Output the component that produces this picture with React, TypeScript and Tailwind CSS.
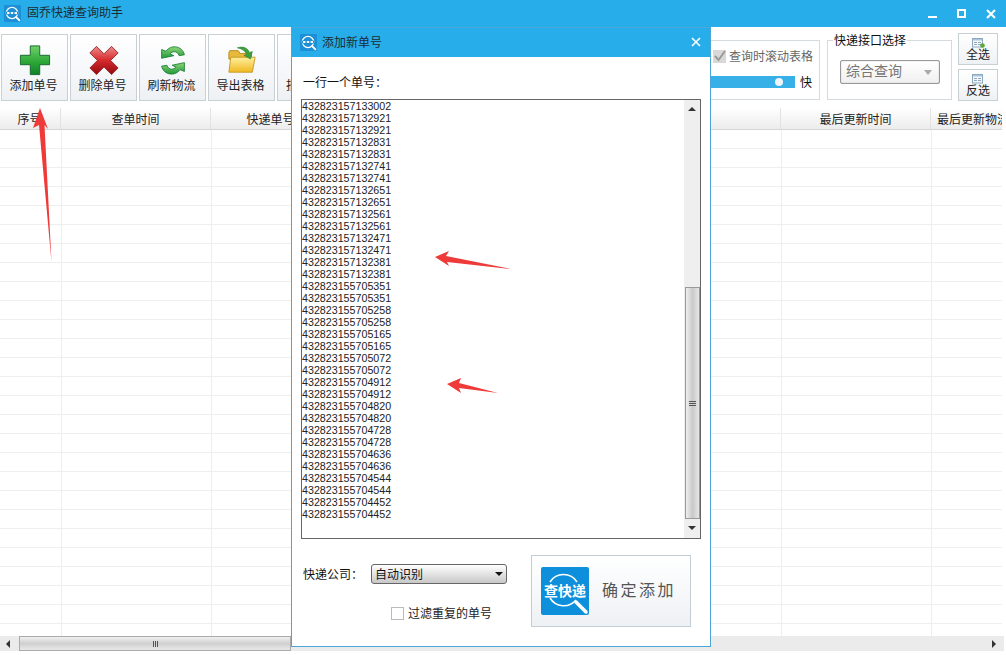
import type { ReactNode } from "react";

const numbers = [
  "432823157133002",
  ...[
    "432823157132921",
    "432823157132831",
    "432823157132741",
    "432823157132651",
    "432823157132561",
    "432823157132471",
    "432823157132381",
    "432823155705351",
    "432823155705258",
    "432823155705165",
    "432823155705072",
    "432823155704912",
    "432823155704820",
    "432823155704728",
    "432823155704636",
    "432823155704544",
    "432823155704452",
  ].flatMap((n) => [n, n]),
];

const columns = [
  { title: "序号", cls: "w-[62px] justify-center" },
  { title: "查单时间", cls: "w-[150px] justify-center" },
  { title: "快递单号", cls: "w-[120px] justify-center" },
  { title: "", cls: "w-[450px] justify-center" },
  { title: "最后更新时间", cls: "w-[150px] justify-center" },
  { title: "最后更新物流信息", cls: "w-[150px] pl-[6px]" },
];

const rows = Array.from({ length: 27 }, (_, i) => i);

const AppLogo = () => (
  <svg width="17" height="17" viewBox="0 0 17 17" className="shrink-0">
    <rect width="17" height="17" rx="1" fill="#1c8fd6" />
    <circle cx="8" cy="8" r="5.600" fill="none" stroke="#fff" strokeWidth="1.300" />
    <rect x="2" y="6.500" width="12" height="3" fill="#1c8fd6" />
    <rect x="3" y="7" width="2.400" height="2" fill="#fff" />
    <rect x="6.800" y="7" width="2.400" height="2" fill="#fff" />
    <rect x="10.600" y="7" width="2.400" height="2" fill="#fff" />
    <path d="M12 12l3.400 3.400" stroke="#fff" strokeWidth="1.800" strokeLinecap="round" />
  </svg>
);

const PlusIcon = () => (
  <svg width="32" height="32" viewBox="0 0 34 34">
    <defs>
      <linearGradient id="plusFill" x1="0" y1="0" x2="0" y2="1">
        <stop offset="0" stopColor="#6fd06a" />
        <stop offset="0.55" stopColor="#2ea838" />
        <stop offset="1" stopColor="#11802a" />
      </linearGradient>
    </defs>
    <path
      d="M12 2h10v10h10.500v10H22v10.500H12V22H1.500V12H12z"
      fill="url(#plusFill)"
      stroke="#14692a"
      strokeWidth="1"
    />
  </svg>
);

const CrossIcon = () => (
  <svg width="32" height="32" viewBox="0 0 34 34">
    <defs>
      <linearGradient id="crossFill" x1="0" y1="0" x2="0" y2="1">
        <stop offset="0" stopColor="#f08a8a" />
        <stop offset="0.5" stopColor="#d42a2c" />
        <stop offset="1" stopColor="#96090f" />
      </linearGradient>
    </defs>
    <path
      d="M9 2.500L17 10.500 25 2.500 32 9.500 24 17.500 32 25.500 25 32.500 17 24.500 9 32.500 2 25.500 10 17.500 2 9.500z"
      fill="url(#crossFill)"
      stroke="#8f2a2c"
      strokeWidth="1"
    />
  </svg>
);

const RefreshIcon = () => (
  <svg width="28" height="32" viewBox="0 0 32 34">
    <defs>
      <linearGradient id="refreshFill" x1="0" y1="0" x2="0" y2="1">
        <stop offset="0" stopColor="#8fd67a" />
        <stop offset="1" stopColor="#1f9a3a" />
      </linearGradient>
    </defs>
    <path
      d="M3 5l5 2C11 3 15 1.500 19 2c5 .5 9 4 10 9l-6 1c-1-3-3-4.500-5.500-4.500-2 0-3.700 1-5 2.500l4.500 2L3 15z"
      fill="url(#refreshFill)"
      stroke="#1c7f34"
      strokeWidth="1"
    />
    <path
      d="M29 30l-5-2c-3 4-7 5.500-11 5-5-.5-9-4-10-9l6-1c1 3 3 4.500 5.500 4.500 2 0 3.700-1 5-2.500l-4.500-2L29 20z"
      fill="url(#refreshFill)"
      stroke="#1c7f34"
      strokeWidth="1"
    />
  </svg>
);

const FolderIcon = () => (
  <svg width="30" height="30" viewBox="0 0 32 32">
    <defs>
      <linearGradient id="folderFill" x1="0" y1="0" x2="0" y2="1">
        <stop offset="0" stopColor="#fff0a0" />
        <stop offset="1" stopColor="#f0b820" />
      </linearGradient>
    </defs>
    <path d="M2 8l1-2h9l2 3h12v6H2z" fill="#e8b93a" stroke="#b98a1c" strokeWidth="1" />
    <path d="M4 13h26l-3 16H2z" fill="url(#folderFill)" stroke="#c79a22" strokeWidth="1" />
    <path
      d="M11 3c6-2 11 0 13 5l3-1-2 8-7-4 3-1c-2-4-5-6-10-7z"
      fill="#3f9f3d"
      stroke="#2a7d2c"
      strokeWidth="0.600"
    />
  </svg>
);

const ListIcon = ({ plus }: { plus?: boolean }) => (
  <svg width="14" height="10" viewBox="0 0 14 10" className="shrink-0">
    <rect x="1.500" y="0.500" width="10" height="8.500" fill="#f4f8fb" stroke="#8fa8c0" />
    <rect x="2" y="1" width="9" height="1.500" fill="#a9c4dc" />
    <path d="M3 4.500h3M7 4.500h3M3 6.500h3M7 6.500h3" stroke="#8fa8c0" />
    {plus && <circle cx="11.500" cy="7.500" r="2.300" fill="#59a83c" />}
  </svg>
);

const ToolButton = ({ label, icon, labelCls }: { label: string; icon?: ReactNode; labelCls?: string }) => (
  <button className="flex h-[67px] w-[67px] shrink-0 flex-col items-center border border-[#c8d0d4] bg-gradient-to-b from-white to-[#eef1f4] pt-[8px] text-[12px] text-[#222]">
    <span className="flex h-[34px] items-center justify-center">{icon}</span>
    <span className={`leading-[16px] whitespace-nowrap ${labelCls ?? "-ml-[2px]"}`}>{label}</span>
  </button>
);

const SmallButton = ({ label, plus }: { label: string; plus?: boolean }) => (
  <button className="flex h-[32px] w-[40px] flex-col items-center border border-[#c8d0d4] bg-gradient-to-b from-white to-[#eef1f4] pt-[4px] text-[12px] leading-[13px] text-[#222]">
    <ListIcon plus={plus} />
    <span className="-mt-[1px]">{label}</span>
  </button>
);

const ArrowMarks = () => (
  <svg width="1006" height="655" viewBox="0 0 1006 655" className="pointer-events-none absolute top-0 left-0 z-20">
    <path d="M40 108L48 129 44.500 125 51.500 262 39 125 33 128z" fill="#ee3a38" />
    <path d="M435 257L449 251 446 256 511 269 447 262 449 266z" fill="#ee3a38" />
    <path d="M447 384L461 378 459 383 498 393 459 388 461 393z" fill="#ee3a38" />
  </svg>
);

const Dialog = () => (
  <div className="absolute top-[27px] left-[291px] z-10 flex h-[620px] w-[420px] flex-col border border-[#4aa6d6] bg-white">
    <div className="flex h-[29px] shrink-0 items-center bg-[#27aeea] pr-[9px] pl-[8px] text-[12px] text-[#1c2b36]">
      <AppLogo />
      <span className="-mt-[2px] ml-[5px]">添加新单号</span>
      <svg width="10" height="10" viewBox="0 0 10 10" className="-mt-[1px] ml-auto">
        <path d="M1 1l8 8M9 1l-8 8" stroke="#fff" strokeWidth="1.600" />
      </svg>
    </div>
    <div className="flex flex-1 flex-col pr-[9px] pl-[9px]">
      <div className="mt-[17px] pl-[2px] text-[12px] leading-[16px] text-[#111]">一行一个单号：</div>
      <div className="mt-[9px] flex h-[440px] border border-[#666] bg-white">
        <div className="flex-1 font-['Liberation_Sans',sans-serif] text-[10.700px] leading-[12px] text-[#222]">
          {numbers.map((n, i) => (
            <div key={i} className="h-[12px]">
              {n}
            </div>
          ))}
        </div>
        <div className="flex w-[16px] shrink-0 flex-col items-center bg-[#efefef]">
          <div className="mt-[7px] h-0 w-0 border-x-[4px] border-b-[4px] border-x-transparent border-b-[#333]" />
          <div className="mt-[176px] flex h-[232px] w-[15px] flex-col items-center justify-center gap-[1px] border border-[#999] bg-gradient-to-r from-[#efefef] via-[#c9c9c9] to-[#e6e6e6]">
            <span className="h-[1px] w-[7px] bg-[#555]" />
            <span className="h-[1px] w-[7px] bg-[#555]" />
            <span className="h-[1px] w-[7px] bg-[#555]" />
          </div>
          <div className="mt-[7px] h-0 w-0 border-x-[4px] border-t-[4px] border-x-transparent border-t-[#333]" />
        </div>
      </div>
      <div className="flex">
        <div className="w-[230px]">
          <div className="mt-[25px] flex items-center pl-[2px] text-[12px] text-[#111]">
            <span className="w-[68px]">快递公司：</span>
            <div className="flex h-[20px] w-[136px] items-center justify-between rounded-[3px] border border-[#666] bg-gradient-to-b from-white to-[#c8c8c8] pr-[3px] pl-[3px]">
              <span>自动识别</span>
              <span className="h-0 w-0 border-x-[4px] border-t-[4px] border-x-transparent border-t-[#111]" />
            </div>
          </div>
          <div className="mt-[20px] ml-[90px] flex items-center text-[12px] text-[#222]">
            <span className="h-[13px] w-[13px] border border-[#bbb] bg-white" />
            <span className="ml-[4px]">过滤重复的单号</span>
          </div>
        </div>
        <button className="mt-[16px] flex h-[72px] w-[160px] items-center border border-[#c5ced6] bg-gradient-to-b from-white to-[#eef1f4] pl-[9px]">
          <span className="relative flex h-[48px] w-[48px] shrink-0 items-center justify-center rounded-[2px] bg-[#0e8fdc]">
            <svg width="48" height="48" viewBox="0 0 48 48" className="absolute top-0 left-0">
              <path d="M9 15a16 16 0 0 1 27 0M9 31a16 16 0 0 0 26 2" fill="none" stroke="#fff" strokeWidth="1.500" />
              <path d="M35 35l10 10" stroke="#fff" strokeWidth="3.500" strokeLinecap="round" />
            </svg>
            <span className="relative -mt-[2px] text-[14px] leading-none font-bold whitespace-nowrap text-white">查快递</span>
          </span>
          <span className="-mt-[5px] ml-[13px] text-[16px] tracking-[2.500px] whitespace-nowrap text-[#555]">确定添加</span>
        </button>
      </div>
    </div>
  </div>
);

export default function App() {
  return (
    <div className="relative flex h-[655px] w-[1006px] flex-col overflow-hidden bg-white font-['Noto_Sans_CJK_SC','Liberation_Sans',sans-serif]">
      {/* title bar */}
      <div className="flex h-[27px] shrink-0 items-center bg-[#27aeea] pr-[10px] pl-[4px] text-[12px] text-[#1c2b36]">
        <AppLogo />
        <span className="-mt-[3px] ml-[6px]">固乔快递查询助手</span>
        <div className="ml-auto flex items-center gap-[20px]">
          <span className="mt-[7px] h-[2px] w-[9px] bg-white" />
          <span className="h-[9px] w-[9px] border-2 border-white" />
          <svg width="10" height="10" viewBox="0 0 10 10">
            <path d="M1 1l8 8M9 1l-8 8" stroke="#fff" strokeWidth="2" />
          </svg>
        </div>
      </div>

      {/* toolbar */}
      <div className="flex h-[81px] shrink-0 items-start justify-between pt-[7px] pr-[8px] pl-[1px]">
        <div className="flex gap-[2px]">
          <ToolButton label="添加单号" icon={<PlusIcon />} />
          <ToolButton label="删除单号" icon={<CrossIcon />} />
          <ToolButton label="刷新物流" icon={<RefreshIcon />} />
          <ToolButton label="导出表格" icon={<FolderIcon />} />
          <ToolButton label="批" labelCls="self-start ml-[8px]" />
        </div>
        <div className="flex gap-[7px]">
          <div className="mt-[6px] flex h-[60px] w-[177px] flex-col items-end border border-[#d4dade] pr-[6px]">
            <div className="mt-[6px] flex items-center text-[12px] text-[#666]">
              <span className="mr-[3px] flex h-[13px] w-[13px] items-center justify-center bg-[#d8d8d8]">
                <svg width="13" height="13" viewBox="0 0 13 13">
                  <path d="M2 6l3.500 4L12 1" fill="none" stroke="#9a9a9a" strokeWidth="2" />
                </svg>
              </span>
              查询时滚动表格
            </div>
            <div className="mt-[8px] mr-[1px] flex items-center text-[12px] text-[#111]">
              <div className="relative h-[12px] w-[150px] bg-[#36b0e6]">
                <span className="absolute top-[2px] right-[12px] h-[8px] w-[8px] rounded-full bg-[#eef6fb]" />
              </div>
              <span className="ml-[5px]">快</span>
            </div>
          </div>
          <div className="relative mt-[6px] flex h-[60px] w-[125px] items-start border border-[#d4dade] pt-[19px] pl-[12px]">
            <span className="absolute -top-[9px] left-[5px] bg-white px-[1px] text-[12px] leading-[16px] text-[#111]">
              快递接口选择
            </span>
            <div className="flex h-[24px] w-[100px] items-center justify-between rounded-[2px] border border-[#999] bg-gradient-to-b from-white to-[#f0f0f0] pr-[7px] pl-[5px] text-[14px] text-[#777] shadow-[inset_0_0_1px_#888]">
              <span className="-mt-[4px]">综合查询</span>
              <span className="h-0 w-0 border-x-[4px] border-t-[5px] border-x-transparent border-t-[#aaa]" />
            </div>
          </div>
          <div className="-mt-[1px] ml-[-1px] flex flex-col gap-[4px]">
            <SmallButton label="全选" plus />
            <SmallButton label="反选" />
          </div>
        </div>
      </div>

      {/* table, clipped a little short of the window edge like the grid control */}
      <div className="w-[1002px] flex-1 overflow-hidden">
        <div className="-ml-[1px] flex h-[22px] w-[1083px] border-b border-[#d6d6d6] bg-gradient-to-b from-white to-[#ececec] text-[12px] text-[#222]">
          {columns.map((c, i) => (
            <div key={i} className={`flex shrink-0 items-center border-r border-[#e2e2e2] whitespace-nowrap ${c.cls}`}>
              {c.title}
            </div>
          ))}
        </div>
        {rows.map((r) => (
          <div key={r} className="flex h-[19px] w-[1082px] border-b border-[#eeeeee]">
            {columns.map((c, i) => (
              <div key={i} className={`shrink-0 border-r border-[#eeeeee] ${c.cls}`} />
            ))}
          </div>
        ))}
      </div>

      {/* horizontal scrollbar */}
      <div className="mb-[4px] flex h-[15px] w-[1004px] shrink-0 items-center bg-[#ebebeb]">
        <div className="ml-[6px] h-0 w-0 border-y-[4px] border-r-[4px] border-y-transparent border-r-[#333]" />
        <div className="ml-[9px] flex h-[15px] w-[272px] items-center justify-center gap-[1px] border border-[#aaa] bg-gradient-to-b from-[#f0f0f0] via-[#d0d0d0] to-[#e8e8e8]">
          <span className="h-[6px] w-[1px] bg-[#555]" />
          <span className="h-[6px] w-[1px] bg-[#555]" />
          <span className="h-[6px] w-[1px] bg-[#555]" />
        </div>
        <div className="mr-[8px] ml-auto h-0 w-0 border-y-[4px] border-l-[4px] border-y-transparent border-l-[#333]" />
      </div>

      <Dialog />
      <ArrowMarks />
    </div>
  );
}
